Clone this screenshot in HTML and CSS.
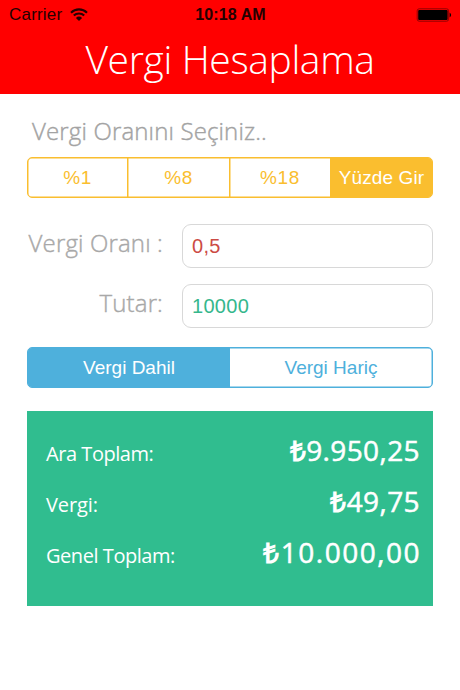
FILE: index.html
```
<!DOCTYPE html>
<html lang="tr">
<head>
<meta charset="utf-8">
<meta name="viewport" content="width=device-width">
<title>Vergi Hesaplama</title>
<link rel="stylesheet" href="styles.css">
</head>
<body>
<header class="header">
  <div class="status">
    <div class="carrier"><span>Carrier</span>
      <svg class="wifi" width="18" height="14" viewBox="0 0 18 14" fill="none" stroke="#250000" stroke-width="2.1"><path d="M1 4.7a11.4 11.4 0 0 1 16 0M3.8 7.6a7.4 7.4 0 0 1 10.4 0"/><path d="M5.9 9.9a4.4 4.4 0 0 1 6.2 0L9 13z" fill="#250000" stroke="none"/></svg>
    </div>
    <time class="time">10:18 AM</time>
    <svg class="battery" width="36" height="14" viewBox="0 0 36 14"><rect x="1.2" y=".8" width="31.4" height="12.4" rx="2" fill="none" stroke="#900000" stroke-width="1"/><rect x="2.2" y="2" width="29.4" height="10" rx="1"/><path d="M33.6 4.5q3 2.5 0 5z"/></svg>
  </div>
  <h1 class="title">Vergi Hesaplama</h1>
</header>
<main class="content">
  <p class="prompt">Vergi Oranını Seçiniz..</p>
  <div class="segments rates">
    <button class="segment">%1</button><button class="segment">%8</button><button class="segment">%18</button><button class="segment active">Yüzde Gir</button>
  </div>
  <div class="fields">
    <label class="label rate-label" for="rate">Vergi Oranı :</label><input class="field rate" id="rate" value="0,5">
    <label class="label amount-label" for="amount">Tutar:</label><input class="field amount" id="amount" value="10000">
  </div>
  <div class="segments modes">
    <button class="segment active">Vergi Dahil</button><button class="segment">Vergi Hariç</button>
  </div>
  <dl class="results">
    <div class="result subtotal"><dt>Ara Toplam:</dt><dd><span class="lira">₺</span>9.950,25</dd></div>
    <div class="result tax"><dt>Vergi:</dt><dd><span class="lira">₺</span>49,75</dd></div>
    <div class="result total"><dt>Genel Toplam:</dt><dd><span class="lira">₺</span>10.000,00</dd></div>
  </dl>
</main>
</body>
</html>
```
FILE: styles.css
```
* { box-sizing: border-box; }
body { margin: 0; background: #fff; font-family: "Open Sans", sans-serif; }
.header { height: 94px; background: #f00; }
.status { height: 30px; padding: 0 8px 0 9px; display: grid; grid-template-columns: 1fr auto 1fr; align-items: center; color: #250000; font: 17px/30px "Liberation Sans", sans-serif; }
.carrier { display: flex; align-items: center; gap: 8px; }
.carrier span { letter-spacing: .2px; }
.wifi { margin-top: -1px; }
.time { font-weight: bold; font-size: 16px; letter-spacing: .1px; }
.battery { justify-self: end; }
.title { margin: 0; height: 60px; text-align: center; color: #fff; font-size: 39px; line-height: 58px; font-weight: 300; letter-spacing: -.35px; white-space: nowrap; }
.content { padding: 21px 27px 0; }
.prompt { margin: 0; height: 42px; padding-left: 5px; line-height: 31px; font-size: 24px; font-weight: 300; letter-spacing: .15px; color: #a3a3a3; -webkit-text-stroke: .4px; white-space: nowrap; }
.segments { display: grid; height: 41px; border: 1px solid; border-radius: 5px; overflow: hidden; box-shadow: inset 0 0 0 .5px; }
.segment { padding: 0; border: 0; border-left: 1px solid; background: none; color: inherit; font: 19px "Liberation Sans", sans-serif; white-space: nowrap; }
.segment:first-child { border-left: 0; }
.rates { grid-template-columns: 99px 102px 101px 1fr; color: #fabe2f; border-color: #fabe2f; }
.rates .segment { border-color: #fabe2f; letter-spacing: .6px; box-shadow: inset .5px 0 #fabe2f; }
.rates .segment:first-child { box-shadow: none; }
.rates .active { background: #fabe2f; color: #fff; letter-spacing: .1px; }
.fields { margin-top: 26px; display: grid; grid-template-columns: 136px 251px; grid-template-rows: 44px 44px; gap: 16px 19px; }
.label { text-align: right; font-size: 24px; line-height: 38px; font-weight: 300; letter-spacing: .15px; color: #a8a8a8; -webkit-text-stroke: .4px; white-space: nowrap; }
.field { width: 100%; height: 44px; border: 1px solid #d8d8d8; border-radius: 9px; padding: 0 9px; background: #fff; font: 20px "Liberation Sans", sans-serif; letter-spacing: .3px; outline: 0; }
.rate { color: #cc4b45; }
.amount { color: #35b78c; }
.modes { margin-top: 19px; grid-template-columns: 1fr 1fr; color: #4eb0dc; border-color: #4eb0dc; }
.modes .segment { border: 0; }
.modes .active { background: #4eb0dc; color: #fff; }
.results { margin: 23px 0 0; height: 195px; padding: 14px 13px 0 19px; background: #30bd8f; color: #fff; }
.result { height: 51px; display: flex; justify-content: space-between; align-items: baseline; line-height: 51px; white-space: nowrap; }
.result dt { font-size: 20px; letter-spacing: -.45px; }
.result dd { margin: 0; font-size: 28px; -webkit-text-stroke: .5px; letter-spacing: .4px; }
.result .lira { -webkit-text-stroke: 0; }
.total dd { letter-spacing: 1.5px; margin-right: -1px; }
.tax dt { letter-spacing: -.1px; }
.lira { font-weight: 700; }
```
